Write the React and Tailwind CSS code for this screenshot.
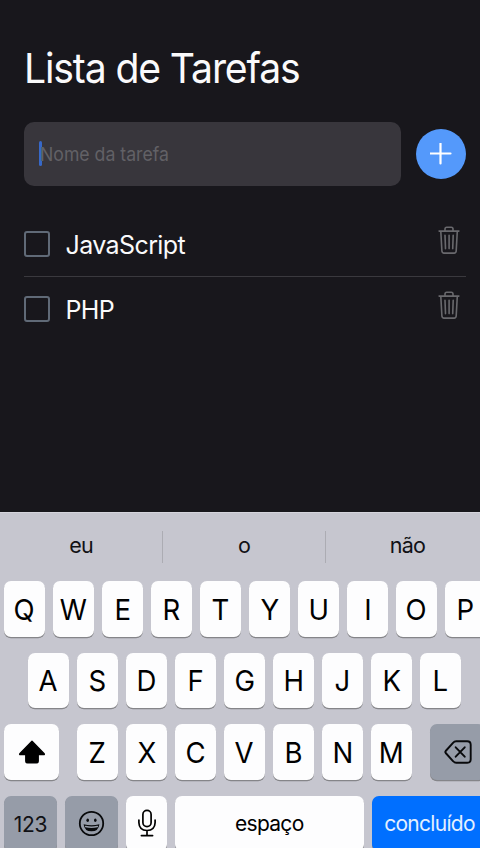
const tasks = ['JavaScript', 'PHP'];

function Trash() {
  return (
    <svg className="mt-[13px] mr-[5px] h-[30px] w-[24px]" viewBox="0 0 24 30" fill="none" stroke="#69696d" strokeWidth="1.6" strokeLinecap="round" strokeLinejoin="round">
      <path d="M2.1 6.1H21.9M8 5.8V3.9Q8 2.2 9.7 2.2H14.3Q16 2.2 16 3.9V5.8M3.8 6.3L4.9 26Q5.1 28.1 7 28.1H17.2Q19 28.1 19.2 26L20.3 6.3M8 10.3L8.5 23.6M12.1 10.3V23.6M16.2 10.3L15.7 23.6" />
    </svg>
  );
}

function Key({ children, className = 'w-[41px] bg-[#fdfdfe]' }) {
  return (
    <div className={`flex h-[55.5px] shrink-0 items-center justify-center rounded-[7px] shadow-[0_1.3px_0_#858589] ${className}`}>
      {children}
    </div>
  );
}

function Letters({ text }) {
  return text.split('').map((letter) => (
    <Key key={letter}>
      <span className="scale-x-95 pt-0.5 text-[29px] leading-[56px] font-[370]">{letter}</span>
    </Key>
  ));
}

function Shift() {
  return (
    <svg className="h-[24px] w-[28px]" viewBox="0 0 28 24" fill="#000" stroke="#000" strokeWidth="1.4" strokeLinejoin="round">
      <path d="M14 1.2L26.2 13.8Q26.7 14.6 25.7 14.6H20.2V21Q20.2 22.8 18.4 22.8H9.6Q7.8 22.8 7.8 21V14.6H2.3Q1.3 14.6 1.8 13.8Z" />
    </svg>
  );
}

function Emoji() {
  return (
    <svg className="h-[27px] w-[27px]" viewBox="0 0 27 27" fill="none" stroke="#08090b" strokeWidth="1.8">
      <circle cx="13.5" cy="13.5" r="11.7" />
      <g fill="#08090b" stroke="none">
        <ellipse cx="9.7" cy="10.3" rx="1.3" ry="1.8" />
        <ellipse cx="17.3" cy="10.3" rx="1.3" ry="1.8" />
        <path d="M5.6 14.2Q13.5 16.4 21.4 14.2Q20.6 21.3 13.5 21.3Q6.4 21.3 5.6 14.2Z" />
      </g>
      <path d="M7.6 16.5Q13.5 18 19.4 16.5" stroke="#969ca8" strokeWidth="1.5" strokeLinecap="round" />
    </svg>
  );
}

function Mic() {
  return (
    <svg className="h-[28px] w-[20px]" viewBox="0 0 20 28" fill="none" stroke="#000" strokeWidth="1.7" strokeLinecap="round">
      <rect x="5.9" y="1.3" width="8.2" height="16.4" rx="4.1" />
      <path d="M1.9 11V13.7Q2.2 21.2 10 21.5Q17.8 21.2 18.1 13.7V11M10 21.5V26.4M4.4 26.6H15.6" />
    </svg>
  );
}

function Delete() {
  return (
    <svg className="h-[24px] w-[28px]" viewBox="0 0 28 24" fill="none" stroke="#08090b" strokeWidth="1.9" strokeLinecap="round" strokeLinejoin="round">
      <path d="M1.7 13Q.9 12 1.7 11L9 2.8Q10.3 1.3 12.2 1.3H23.2Q26.7 1.3 26.7 4.8V19.2Q26.7 22.7 23.2 22.7H12.2Q10.3 22.7 9 21.2ZM11.7 7.3L20.7 16.7M20.7 7.3L11.7 16.7" />
    </svg>
  );
}

export default function App() {
  return (
    <div className="flex h-[848px] w-[480px] flex-col overflow-hidden bg-[#18171c] font-['Inter','Liberation_Sans',sans-serif]">
      <main className="h-[512px] shrink-0 pr-[14px] pl-6">
        <h1 className="origin-left scale-x-[0.955] pt-[38px] text-[41px] leading-[60px] font-normal tracking-[-1.2px] whitespace-nowrap text-[#fafafb]">Lista de Tarefas</h1>
        <div className="mt-6 flex items-center justify-between">
          <div className="flex h-[63.5px] w-[377px] items-center rounded-[10px] bg-[#38363c] pl-[15px]">
            <span className="h-[25px] w-[3px] rounded-full bg-[#3768c8]" />
            <span className="-ml-[2px] origin-left scale-x-[0.94] pt-0.5 text-[18.8px] text-[#626166]">Nome da tarefa</span>
          </div>
          <button className="flex size-[50px] items-center justify-center rounded-full bg-[#5499fb]">
            <svg className="size-[22px]" viewBox="0 0 22 22" fill="none" stroke="#fff" strokeWidth="2.2" strokeLinecap="round">
              <path d="M10.5 .5V20.5M.5 10.5H20.5" />
            </svg>
          </button>
        </div>
        <ul className="mt-[26px]">
          {tasks.map((task) => (
            <li key={task} className="flex h-[65px] border-b border-[#3a393e] last:border-0">
              <span className="mt-[19px] size-[26px] shrink-0 rounded-[3px] border-[2.5px] border-[#606a77]" />
              <span className="ml-[15.5px] grow pt-[18px] text-[25px] leading-[30px] tracking-[-0.6px] text-[#fafafb]">{task}</span>
              <Trash />
            </li>
          ))}
        </ul>
      </main>
      <section className="h-[336px] shrink-0 overflow-hidden border-t border-[#d5d5dc] bg-[#c6c6cf] text-black">
        <div className="flex h-[68px] w-[489px] items-center text-[21.5px] tracking-[-0.8px] text-[#111115]">
          <div className="flex h-8 w-[163px] items-center justify-center border-r border-[#acacb3] pb-[3px]">eu</div>
          <div className="flex h-8 w-[163px] items-center justify-center border-r border-[#acacb3] pb-[3px]">o</div>
          <div className="flex h-8 w-[163px] items-center justify-center pb-[3px]">não</div>
        </div>
        <div className="flex flex-col gap-4 pl-1">
          <div className="flex gap-2"><Letters text="QWERTYUIOP" /></div>
          <div className="flex gap-2 pl-6"><Letters text="ASDFGHJKL" /></div>
          <div className="flex gap-2">
            <Key className="mr-[10px] w-[55px] bg-[#fdfdfe]"><Shift /></Key>
            <Letters text="ZXCVBNM" />
            <Key className="ml-[10px] w-[55px] bg-[#969ca8]"><Delete /></Key>
          </div>
          <div className="flex gap-2">
            <Key className="w-[53px] bg-[#969ca8]"><span className="pt-0.5 text-[21px] font-[370] tracking-[-0.3px] text-[#111115]">123</span></Key>
            <Key className="w-[53px] bg-[#969ca8]"><Emoji /></Key>
            <Key><Mic /></Key>
            <Key className="w-[188.5px] bg-[#fdfdfe]"><span className="text-[21px] tracking-[-0.7px]">espaço</span></Key>
            <Key className="w-[116px] bg-[#006fff]"><span className="text-[21px] tracking-[-0.7px] text-[#e4efff]">concluído</span></Key>
          </div>
        </div>
      </section>
    </div>
  );
}
